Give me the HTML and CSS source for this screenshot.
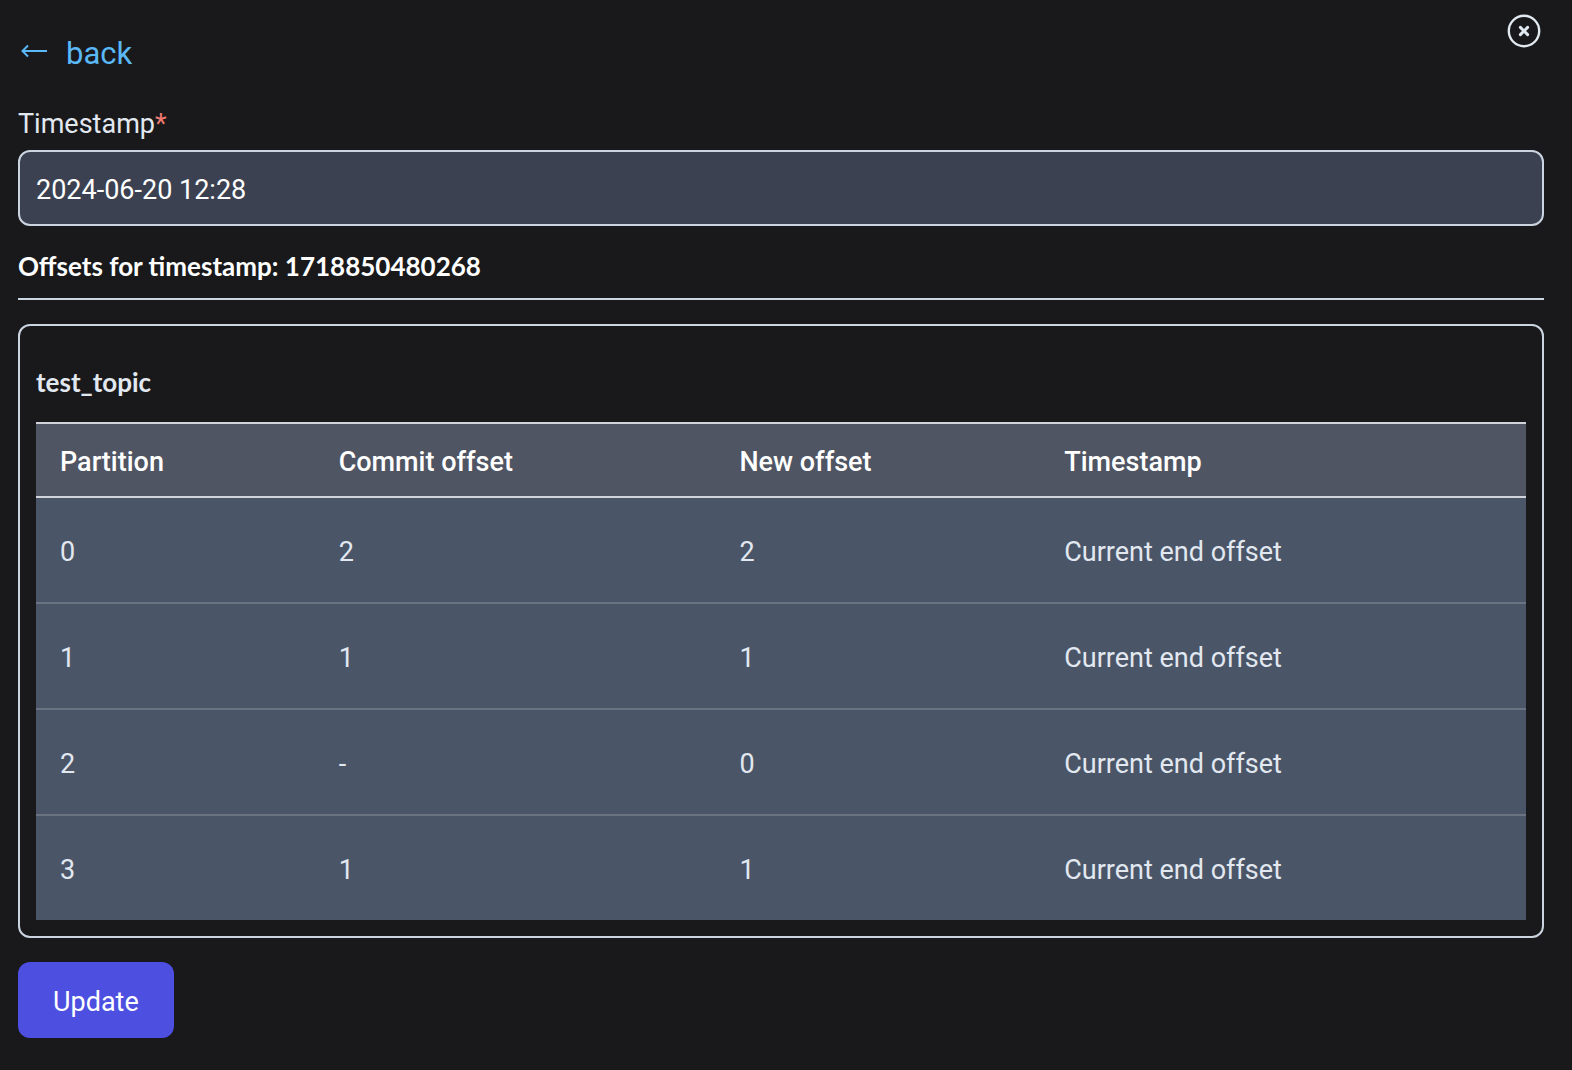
FILE: index.html
```html
<!DOCTYPE html>
<html lang="en">
<head>
<meta charset="utf-8">
<meta name="viewport" content="width=device-width, initial-scale=1">
<title>Update offsets</title>
<link rel="stylesheet" href="styles.css">
</head>
<body>
<main class="panel">
  <header class="panel-head">
    <a class="back" href="#">
      <svg class="back-icon" viewBox="0 0 32 16" aria-hidden="true"><path d="M29 8H4.500M10 2.500 4.500 8 10 13.500"/></svg>
      <span>back</span>
    </a>
    <button class="close" type="button" aria-label="Close">
      <svg viewBox="0 0 34 34" aria-hidden="true"><circle cx="17" cy="17" r="15.2"/><path class="cross" d="M13.4 13.4l7.2 7.2M20.6 13.4l-7.2 7.2"/></svg>
    </button>
  </header>

  <form class="form">
    <label class="label" for="timestamp">Timestamp<span class="required">*</span></label>
    <input class="input" id="timestamp" type="text" value="2024-06-20 12:28">

    <h1 class="title">Offsets for timestamp: 1718850480268</h1>

    <section class="card">
      <h2 class="topic">test_topic</h2>
      <table class="offsets">
        <thead>
          <tr><th class="col-partition">Partition</th><th class="col-commit">Commit offset</th><th class="col-new">New offset</th><th>Timestamp</th></tr>
        </thead>
        <tbody>
          <tr><td>0</td><td>2</td><td>2</td><td>Current end offset</td></tr>
          <tr><td>1</td><td>1</td><td>1</td><td>Current end offset</td></tr>
          <tr><td>2</td><td>-</td><td>0</td><td>Current end offset</td></tr>
          <tr><td>3</td><td>1</td><td>1</td><td>Current end offset</td></tr>
        </tbody>
      </table>
    </section>

    <button class="submit" type="submit">Update</button>
  </form>
</main>
</body>
</html>
```
FILE: styles.css
```css
* {
  box-sizing: border-box;
}

body {
  margin: 0;
  background: #19191b;
  color: #e2e8f0;
  font: 27px/40px Roboto, "Liberation Sans", sans-serif;
}

.panel {
  padding: 14px 28px 32px 18px;
}

.panel-head {
  display: flex;
  justify-content: space-between;
  align-items: flex-start;
}

.back {
  display: flex;
  gap: 16px;
  padding-top: 20px;
  color: #5bb8f7;
  font-size: 31px;
  text-decoration: none;
}

.back-icon {
  width: 32px;
  height: 16px;
  margin-top: 9px;
  fill: none;
  stroke: currentColor;
  stroke-width: 2;
}

.close {
  width: 34px;
  height: 34px;
  margin-right: 3px;
  padding: 0;
  border: 0;
  background: none;
  color: #e2e8f0;
}

.close svg {
  display: block;
  fill: none;
  stroke: currentColor;
  stroke-width: 2.4;
}

.close .cross {
  stroke-width: 3;
  stroke-linecap: round;
}

.form {
  display: flex;
  flex-direction: column;
  align-items: stretch;
  padding-top: 30px;
}

.label {
  margin-bottom: 6px;
}

.required {
  color: #f07a70;
}

.input {
  width: 100%;
  height: 76px;
  padding: 4px 16px 0;
  border: 2px solid #cbd5e1;
  border-radius: 12px;
  background: #3b4151;
  color: #fff;
  font: inherit;
}

.title {
  margin: 20px 0 24px;
  padding-bottom: 12px;
  border-bottom: 2px solid #cbd5e1;
  color: #fff;
  font: 700 26px/40px Lato, sans-serif;
}

.card {
  padding: 36px 16px 16px;
  border: 2px solid #cbd5e1;
  border-radius: 12px;
}

.topic {
  margin: 0 0 20px;
  font: 700 26px/40px Lato, sans-serif;
}

.offsets {
  width: 100%;
  border-spacing: 0;
  table-layout: fixed;
  text-align: left;
}

.offsets th,
.offsets td {
  padding: 4px 24px 0;
}

.offsets th {
  height: 76px;
  border: solid #d1d5db;
  border-width: 2px 0;
  background: #4f5563;
  color: #fff;
  font-weight: 500;
}

.offsets td {
  height: 106px;
  border-bottom: 2px solid #6b7280;
  background: #4a5568;
}

.offsets tr:last-child td {
  height: 104px;
  border-bottom: 0;
}

.col-partition {
  width: 18.7%;
}

.col-commit {
  width: 26.9%;
}

.col-new {
  width: 21.8%;
}

.submit {
  align-self: flex-start;
  height: 76px;
  margin-top: 24px;
  padding: 4px 35px 0;
  border: 0;
  border-radius: 12px;
  background: #4c4fe0;
  color: #fff;
  font: inherit;
}
```
